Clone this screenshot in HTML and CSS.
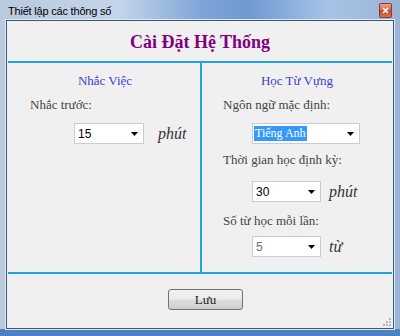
FILE: index.html
```html
<!DOCTYPE html>
<html>
<head>
	<title>Thiết lập các thông số</title>
	<link rel="stylesheet" href="styles.css">
</head>
<body>
	<div class="window">
		<div class="titlebar">
			<span class="caption">Thiết lập các thông số</span>
			<span class="close">
				<svg width="11" height="13" viewBox="0 0 11 13">
					<path d="M3 4 L8 9 M8 4 L3 9" stroke="#fff" stroke-width="1.6"/>
				</svg>
			</span>
		</div>
		<div class="client">
			<div class="heading">Cài Đặt Hệ Thống</div>
			<div class="panels">
				<div class="panel left">
					<div class="panel-title">Nhắc Việc</div>
					<div class="label">Nhắc trước:</div>
					<div class="row row-left">
						<div class="combo w70">
							<span class="value">15</span>
							<svg class="arrow" width="7" height="4" viewBox="0 0 7 4"><path d="M0 0 H7 L3.5 4 Z" fill="#000"/></svg>
						</div>
						<span class="unit">phút</span>
					</div>
				</div>
				<div class="panel right">
					<div class="panel-title">Học Từ Vựng</div>
					<div class="label">Ngôn ngữ mặc định:</div>
					<div class="row row-right">
						<div class="combo w108">
							<span class="value selected">Tiếng Anh</span>
							<svg class="arrow" width="7" height="4" viewBox="0 0 7 4"><path d="M0 0 H7 L3.5 4 Z" fill="#000"/></svg>
						</div>
					</div>
					<div class="label l2">Thời gian học định kỳ:</div>
					<div class="row row-right r2">
						<div class="combo w69">
							<span class="value">30</span>
							<svg class="arrow" width="7" height="4" viewBox="0 0 7 4"><path d="M0 0 H7 L3.5 4 Z" fill="#000"/></svg>
						</div>
						<span class="unit">phút</span>
					</div>
					<div class="label l3">Số từ học mỗi lần:</div>
					<div class="row row-right r3">
						<div class="combo w69">
							<span class="value dim">5</span>
							<svg class="arrow" width="7" height="4" viewBox="0 0 7 4"><path d="M0 0 H7 L3.5 4 Z" fill="#000"/></svg>
						</div>
						<span class="unit">từ</span>
					</div>
				</div>
			</div>
			<div class="footer">
				<button class="btn">Lưu</button>
			</div>
			<svg class="grip" width="9" height="9" viewBox="0 0 9 9">
				<g fill="#b8b8b8">
					<rect x="7" y="1" width="2" height="2"/>
					<rect x="4" y="4" width="2" height="2"/>
					<rect x="7" y="4" width="2" height="2"/>
					<rect x="1" y="7" width="2" height="2"/>
					<rect x="4" y="7" width="2" height="2"/>
					<rect x="7" y="7" width="2" height="2"/>
				</g>
			</svg>
		</div>
	</div>
</body>
</html>
```

FILE: styles.css
```css
body {
	margin: 0;
	background: #8da6c6;
}
.window {
	width: 400px;
	height: 336px;
	box-sizing: border-box;
	padding: 0 6px 7px 6px;
	display: flex;
	flex-direction: column;
	background: linear-gradient(to right, #b9c9de 0%, #c4d4e9 30%, #80a6d8 50%, #6e99d2 62%, #a7c3e6 82%, #9cb4d4 100%);
	box-shadow: inset 0 -7px 0 #4f7fc4;
}
.titlebar {
	height: 20px;
	display: flex;
	align-items: center;
	justify-content: space-between;
	padding: 0 2px 0 2px;
}
.caption {
	font-family: "Liberation Sans", Arial, sans-serif;
	font-size: 11px;
	color: #000;
	letter-spacing: -0.2px;
	margin-top: 2px;
}
.close {
	width: 11px;
	height: 13px;
	margin-top: 1px;
	border-radius: 2px;
	border: 1px solid #8a3a2a;
	background: linear-gradient(to bottom, #e8a590 0%, #d8684c 45%, #c9452a 55%, #d8715a 100%);
	display: flex;
}
.client {
	position: relative;
	flex: 1;
	background: #f0f0f0;
	border: 1px solid #3b5478;
	box-shadow: 0 0 0 1px #dfe8f4;
	padding: 0 1px;
	display: flex;
	flex-direction: column;
}
.heading {
	height: 40px;
	display: flex;
	align-items: center;
	justify-content: center;
	font-family: "Liberation Serif", "Times New Roman", serif;
	font-weight: bold;
	font-size: 18px;
	color: #800080;
	padding-top: 2px;
	box-sizing: border-box;
}
.panels {
	display: flex;
	height: 213px;
	box-sizing: border-box;
	border-top: 2px solid #1ea2e8;
	border-bottom: 2px solid #1ea2e8;
}
.panel {
	box-sizing: border-box;
	padding-top: 10px;
	font-family: "Liberation Serif", "Times New Roman", serif;
}
.left {
	width: 194px;
	border-right: 2px solid #1ea2e8;
}
.right {
	width: 190px;
}
.panel-title {
	font-size: 13px;
	line-height: 15px;
	color: #3c3cd2;
	text-align: center;
}
.left .panel-title {
	padding-left: 2px;
}
.label {
	font-size: 13px;
	line-height: 15px;
	color: #444;
	margin-top: 9px;
}
.left .label {
	padding-left: 22px;
}
.right .label {
	padding-left: 21px;
}
.row {
	display: flex;
	align-items: center;
	margin-top: 11px;
}
.row-left {
	padding-left: 66px;
}
.row-right {
	padding-left: 50px;
}
.l2 {
	margin-top: 8px;
}
.r2 {
	margin-top: 14px;
}
.l3 {
	margin-top: 11px;
}
.r3 {
	margin-top: 8px;
}
.combo {
	height: 21px;
	box-sizing: border-box;
	border: 1px solid #c7cdd6;
	background: #fff;
	display: flex;
	align-items: center;
	justify-content: space-between;
	padding: 0 5px 0 3px;
}
.w70 {
	width: 70px;
}
.w108 {
	width: 108px;
	padding-left: 1px;
}
.w69 {
	width: 69px;
}
.value {
	font-family: "Liberation Sans", Arial, sans-serif;
	font-size: 12px;
	color: #000;
}
.value.selected {
	font-family: "Liberation Serif", "Times New Roman", serif;
	font-size: 12px;
	line-height: 15px;
	background: #3399ff;
	color: #fff;
	padding: 0 1px;
}
.value.dim {
	color: #6d6d6d;
}
.unit {
	font-family: "Liberation Serif", "Times New Roman", serif;
	font-style: italic;
	font-size: 16px;
	color: #333;
	margin-left: 14px;
}
.r2 .unit,
.r3 .unit {
	margin-left: 8px;
}
.footer {
	padding: 15px 0 0 160px;
}
.btn {
	width: 75px;
	height: 21px;
	border: 1px solid #707070;
	border-radius: 3px;
	background: linear-gradient(to bottom, #f2f2f2 0%, #ebebeb 48%, #dcdcdc 52%, #cfcfcf 100%);
	font-family: "Liberation Serif", "Times New Roman", serif;
	font-size: 13px;
	color: #222;
	padding: 0;
}
.grip {
	position: absolute;
	right: 2px;
	bottom: 2px;
}
```
